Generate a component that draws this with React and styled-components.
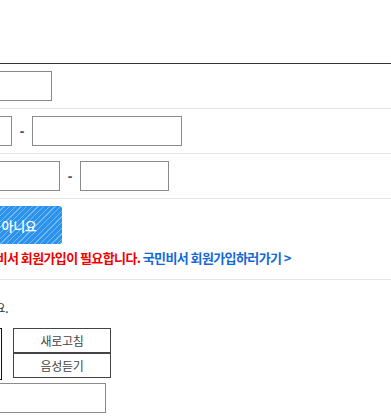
import React from "react";
import styled, { createGlobalStyle } from "styled-components";

const GlobalStyle = createGlobalStyle`
  html, body {
    margin: 0;
    padding: 0;
    background: #fff;
    overflow: hidden;
  }
  body {
    font-family: "Noto Sans CJK KR", "Noto Sans", sans-serif;
    color: #333;
  }
`;

const Page = styled.div`
  width: 391px;
  height: 417px;
  overflow: hidden;
  padding-top: 63px;
  box-sizing: border-box;
`;

const Form = styled.div`
  border-top: 1px solid #333;
  margin-left: -20px;
`;

const Row = styled.div`
  border-bottom: ${(p) => (p.$last ? "none" : "1px solid #e6e6e6")};
  padding: ${(p) => p.$pad || "7px 0"};
  display: flex;
  flex-direction: column;
  align-items: flex-start;
`;

const Inline = styled.div`
  display: flex;
  align-items: center;
`;

const Input = styled.input`
  width: ${(p) => p.$w}px;
  height: 30px;
  box-sizing: border-box;
  border: 1px solid #8a8a8a;
  padding: 0 6px;
  margin: 0;
  font: inherit;
  background: #fff;
`;

const Dash = styled.span`
  width: 20px;
  text-align: center;
  font-size: 14px;
  font-weight: 700;
  font-family: "Liberation Sans", sans-serif;
  color: #555;
`;

const Button = styled.button`
  width: 82px;
  height: 38px;
  border: none;
  border-radius: 3px;
  color: #fff;
  font-family: "Noto Sans CJK KR", sans-serif;
  font-size: 13px;
  font-weight: 500;
  letter-spacing: -0.3px;
  background-color: #2b93ec;
  background-image: repeating-linear-gradient(
    -45deg,
    rgba(255, 255, 255, 0) 0,
    rgba(255, 255, 255, 0) 3px,
    rgba(255, 255, 255, 0.35) 3px,
    rgba(255, 255, 255, 0.35) 4px
  );
  padding: 0 4px 0 0;
  cursor: pointer;
`;

const Message = styled.p`
  margin: 6px 0 0 -7px;
  font-size: 13px;
  font-weight: 700;
  letter-spacing: -0.6px;
  line-height: 16px;
  white-space: nowrap;
  color: #f00000;
`;

const JoinLink = styled.a`
  color: #1468d8;
  text-decoration: none;
`;

const Guide = styled.div`
  width: 228px;
  margin-left: -200px;
  text-align: right;
  font-size: 12px;
  letter-spacing: -0.5px;
  line-height: 16px;
  color: #333;
  white-space: nowrap;
`;

const CaptchaArea = styled.div`
  display: flex;
  gap: 11px;
  margin-top: 12px;
`;

const CaptchaImage = styled.div`
  width: 22px;
  height: 52px;
  box-sizing: border-box;
  border: 1px solid #111;
`;

const CaptchaTools = styled.div`
  display: flex;
  flex-direction: column;
`;

const ToolButton = styled.button`
  width: 98px;
  height: 25px;
  box-sizing: border-box;
  border: 1px solid #444;
  background: #fff;
  color: #444;
  font-family: "Noto Sans CJK KR", sans-serif;
  font-size: 12px;
  letter-spacing: -0.3px;
  padding: 0;
  margin: 0;
`;

const CaptchaInput = styled(Input)`
  margin-top: 3px;
`;

export default function App() {
  return (
    <>
      <GlobalStyle />
      <Page>
        <Form>
          <Row>
            <Input $w={72} />
          </Row>
          <Row>
            <Inline>
              <Input $w={32} />
              <Dash>-</Dash>
              <Input $w={150} />
            </Inline>
          </Row>
          <Row>
            <Inline>
              <Input $w={80} />
              <Dash>-</Dash>
              <Input $w={89} />
            </Inline>
          </Row>
          <Row $pad="7px 0 13px">
            <Button>아니요</Button>
            <Message>
              국민비서 회원가입이 필요합니다.{" "}
              <JoinLink href="#">국민비서 회원가입하러가기 &gt;</JoinLink>
            </Message>
          </Row>
          <Row $last $pad="20px 0 0">
            <Guide>이미지의 문자를 입력해 주세요.</Guide>
            <CaptchaArea>
              <CaptchaImage />
              <CaptchaTools>
                <ToolButton>새로고침</ToolButton>
                <ToolButton>음성듣기</ToolButton>
              </CaptchaTools>
            </CaptchaArea>
            <CaptchaInput $w={126} />
          </Row>
        </Form>
      </Page>
    </>
  );
}
